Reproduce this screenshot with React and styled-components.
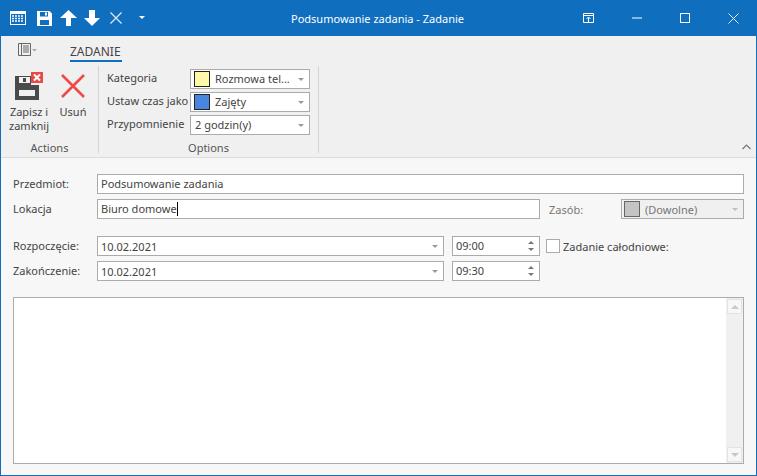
import styled, { createGlobalStyle } from "styled-components";

const GlobalStyle = createGlobalStyle`
  html, body { margin: 0; padding: 0; }
  body { width: 757px; height: 476px; overflow: hidden; font-family: "Noto Sans", sans-serif; font-size: 11px; color: #444; }
  * { box-sizing: border-box; }
`;

const Window = styled.div`
  width: 757px;
  height: 476px;
  display: flex;
  flex-direction: column;
  border: 1px solid #106ebe;
  border-top: none;
  background: #f7f7f7;
`;
const TitleBar = styled.div`
  height: 36px;
  background: #106ebe;
  display: grid;
  grid-template-columns: 199px 1fr 201px;
  align-items: center;
  color: #fff;
  flex: none;
`;
const QuickAccess = styled.div`
  display: flex;
  align-items: center;
  padding-left: 9px;
`;
const QuickIcon = styled.svg`
  display: block;
  flex: none;
  margin-right: ${(p) => p.$gap}px;
`;
const WindowTitle = styled.div`
  text-align: center;
  font-size: 11px;
`;
const WindowButtons = styled.div`
  display: flex;
  justify-content: flex-end;
  align-items: center;
  padding-right: 17px;
`;
const WindowIcon = styled.svg`
  display: block;
  margin-left: ${(p) => p.$gap}px;
`;
const Ribbon = styled.div`
  height: 122px;
  background: #f0f0f0;
  border-bottom: 1px solid #dcdcdc;
  position: relative;
  flex: none;
`;
const TabRow = styled.div`
  height: 26px;
  display: flex;
  align-items: flex-start;
  padding: 6px 0 0 16px;
`;
const Tab = styled.div`
  margin-left: 33px;
  height: 20px;
  width: 52px;
  font-size: 12px;
  line-height: 15px;
  padding-top: 2px;
  color: #444;
  border-bottom: 2px solid #106ebe;
  white-space: nowrap;
`;
const Groups = styled.div`
  display: flex;
  height: 87px;
  margin-top: 4px;
`;
const Group = styled.div`
  width: ${(p) => p.$width}px;
  border-right: 1px solid #d4d4d4;
  display: flex;
  flex-direction: column;
`;
const GroupBody = styled.div`
  flex: 1;
  min-height: 0;
  display: flex;
`;
const GroupLabel = styled.div`
  height: 10px;
  flex: none;
  text-align: center;
  line-height: 10px;
  color: #555;
`;
const BigButton = styled.div`
  width: ${(p) => p.$width}px;
  margin-left: ${(p) => p.$left || 0}px;
  padding-top: 6px;
  display: flex;
  flex-direction: column;
  align-items: center;
  line-height: 14px;
  text-align: center;
  white-space: nowrap;
`;
const BigIcon = styled.svg`
  display: block;
  margin-bottom: 1px;
`;
const OptionGrid = styled.div`
  display: grid;
  grid-template-columns: 83px 120px;
  grid-auto-rows: 23px;
  padding: 1px 0 0 8px;
  align-items: center;
`;
const OptionLabel = styled.div`
  white-space: nowrap;
  padding-bottom: 2px;
`;
const Combo = styled.div`
  height: 20px;
  width: ${(p) => (p.$width ? `${p.$width}px` : "auto")};
  flex: none;
  border: 1px solid #ababab;
  background: ${(p) => (p.$disabled ? "#f0f0f0" : "#fff")};
  color: ${(p) => (p.$disabled ? "#777" : "#444")};
  display: flex;
  align-items: center;
  padding-left: ${(p) => p.$pad ?? 4}px;
  position: relative;
  white-space: nowrap;
`;
const Swatch = styled.span`
  width: 16px;
  height: 16px;
  flex: none;
  border: 1px solid ${(p) => p.$border || "#222"};
  background: ${(p) => p.$color};
  margin-right: 5px;
`;
const Arrow = styled.span`
  position: absolute;
  right: 5px;
  top: 50%;
  margin-top: -1px;
  border-left: 3px solid transparent;
  border-right: 3px solid transparent;
  border-top: 3px solid ${(p) => p.$color || "#999"};
`;
const Collapse = styled.svg`
  position: absolute;
  right: 5px;
  bottom: 7px;
`;
const Form = styled.div`
  flex: 1;
  padding: 16px 12px 12px 12px;
  display: flex;
  flex-direction: column;
`;
const Row = styled.div`
  display: flex;
  align-items: center;
  height: 20px;
  margin-bottom: ${(p) => p.$mb ?? 5}px;
`;
const FieldLabel = styled.div`
  width: 84px;
  flex: none;
  white-space: nowrap;
  padding-bottom: 2px;
`;
const TextField = styled.div`
  width: ${(p) => p.$width}px;
  height: 20px;
  border: 1px solid #ababab;
  background: #fff;
  padding-left: 3px;
  line-height: 17px;
  flex: none;
`;
const Caret = styled.span`
  display: inline-block;
  width: 1px;
  height: 14px;
  background: #000;
  vertical-align: -3px;
`;
const ResourceLabel = styled.div`
  color: #777;
  margin-left: 9px;
  width: 72px;
`;
const Spinner = styled.div`
  width: 88px;
  height: 20px;
  margin-left: 8px;
  border: 1px solid #ababab;
  background: #fff;
  padding-left: 3px;
  line-height: 17px;
  position: relative;
  flex: none;
`;
const SpinUp = styled.span`
  position: absolute;
  right: 5px;
  top: 4px;
  border-left: 3px solid transparent;
  border-right: 3px solid transparent;
  border-bottom: 3px solid #777;
`;
const SpinDown = styled.span`
  position: absolute;
  right: 5px;
  bottom: 4px;
  border-left: 3px solid transparent;
  border-right: 3px solid transparent;
  border-top: 3px solid #777;
`;
const Check = styled.span`
  width: 14px;
  height: 14px;
  border: 1px solid #ababab;
  background: #fff;
  margin: 0 3px 0 6px;
  flex: none;
`;
const Notes = styled.div`
  margin-top: 16px;
  width: 731px;
  height: 167px;
  border: 1px solid #ababab;
  background: #fff;
  display: flex;
  justify-content: flex-end;
`;
const ScrollTrack = styled.div`
  width: 17px;
  background: #f0f0f0;
  display: flex;
  flex-direction: column;
  justify-content: space-between;
  align-items: center;
  padding: 1px;
`;
const ScrollButton = styled.div`
  width: 15px;
  height: 15px;
  border: 1px solid #e3e3e3;
  background: #f7f7f7;
  display: flex;
  align-items: center;
  justify-content: center;
`;
const ScrollGlyph = styled.span`
  border-left: 4px solid transparent;
  border-right: 4px solid transparent;
  ${(p) => (p.$up ? "border-bottom" : "border-top")}: 4px solid #c8c8c8;
`;

const App = () => {
  return (
    <>
      <GlobalStyle />
      <Window>
        <TitleBar>
          <QuickAccess>
            <QuickIcon $gap={11} width="16" height="16" viewBox="0 0 16 16">
              <rect x="0.5" y="1.5" width="15" height="13" fill="none" stroke="#fff" />
              <rect x="0" y="1" width="16" height="3" fill="#fff" />
              <path d="M2 6h12M2 8.500h12M2 11h12" stroke="#fff" strokeWidth="1.400" strokeDasharray="2 1" fill="none" />
            </QuickIcon>
            <QuickIcon $gap={8} width="15" height="15" viewBox="0 0 15 15">
              <path fillRule="evenodd" fill="#fff" d="M0 0h12.500L15 2.500V15H0zM3 1v4.500h8V1zM3 9v5h9V9zM8 1.500h2v3H8z" />
            </QuickIcon>
            <QuickIcon $gap={7} width="17" height="16" viewBox="0 0 17 16">
              <path fill="#fff" d="M8.500 0L17 8h-6v8H6V8H0z" />
            </QuickIcon>
            <QuickIcon $gap={10} width="16" height="16" viewBox="0 0 16 16">
              <path fill="#fff" d="M8 16L0 8h5V0h6v8h5z" />
            </QuickIcon>
            <QuickIcon $gap={17} width="12" height="12" viewBox="0 0 12 12">
              <path d="M.5.500l11 11M11.500.500l-11 11" stroke="#dce9f5" strokeWidth="1.300" fill="none" />
            </QuickIcon>
            <QuickIcon $gap={0} width="6" height="4" viewBox="0 0 6 4">
              <path fill="#fff" d="M0 0h6L3 3z" />
            </QuickIcon>
          </QuickAccess>
          <WindowTitle>Podsumowanie zadania - Zadanie</WindowTitle>
          <WindowButtons>
            <WindowIcon $gap={0} width="11" height="10" viewBox="0 0 11 10">
              <path d="M.5.500h10v9H.5zM0 2.500h11M5.500 9V4.500M3.500 6l2-2 2 2" stroke="#fff" fill="none" />
            </WindowIcon>
            <WindowIcon $gap={38} width="10" height="10" viewBox="0 0 10 10">
              <path d="M0 5h10" stroke="#fff" />
            </WindowIcon>
            <WindowIcon $gap={38} width="10" height="10" viewBox="0 0 10 10">
              <rect x="0.5" y="0.5" width="9" height="9" fill="none" stroke="#fff" />
            </WindowIcon>
            <WindowIcon $gap={38} width="11" height="11" viewBox="0 0 11 11">
              <path d="M.5.500l10 10M10.500.500l-10 10" stroke="#e6eff8" fill="none" />
            </WindowIcon>
          </WindowButtons>
        </TitleBar>
        <Ribbon>
          <TabRow>
            <svg width="20" height="16" viewBox="0 0 20 16">
              <path d="M1.500 1.500h12v12h-12zM4.500 1.500v12M6 4h6M6 6h6M6 8h6M6 10h6" stroke="#666" fill="none" />
              <path d="M15 7h5l-2.500 2.500z" fill="#aaa" />
            </svg>
            <Tab>ZADANIE</Tab>
          </TabRow>
          <Groups>
            <Group $width={98}>
              <GroupBody>
                <BigButton $width={56}>
                  <BigIcon width="30" height="32" viewBox="0 0 30 32">
                    <path fillRule="evenodd" fill="#4a4a4a" d="M1 4h24v24H1zM5 5v6h11V5zM9 6h3v4H9zM5 18v6h16v-6z" />
                    <path fill="#f0f0f0" d="M17 0h13v13H17z" />
                    <rect x="17" y="0" width="12" height="11" fill="#e84a4a" />
                    <path d="M20 2.500l6 6M26 2.500l-6 6" stroke="#fff" strokeWidth="2" />
                  </BigIcon>
                  Zapisz i<br />zamknij
                </BigButton>
                <BigButton $width={24} $left={4}>
                  <BigIcon width="26" height="32" viewBox="0 0 26 32">
                    <path d="M2 3l22 22M24 3L2 25" stroke="#ee4a4a" strokeWidth="2.600" fill="none" />
                  </BigIcon>
                  Usuń
                </BigButton>
              </GroupBody>
              <GroupLabel>Actions</GroupLabel>
            </Group>
            <Group $width={220}>
              <GroupBody>
                <OptionGrid>
                  <OptionLabel>Kategoria</OptionLabel>
                  <Combo $pad={3}>
                    <Swatch $color="#fff8a8" />
                    Rozmowa tel...
                    <Arrow />
                  </Combo>
                  <OptionLabel>Ustaw czas jako</OptionLabel>
                  <Combo $pad={3}>
                    <Swatch $color="#4a86e0" />
                    Zajęty
                    <Arrow />
                  </Combo>
                  <OptionLabel>Przypomnienie</OptionLabel>
                  <Combo>
                    2 godzin(y)
                    <Arrow />
                  </Combo>
                </OptionGrid>
              </GroupBody>
              <GroupLabel>Options</GroupLabel>
            </Group>
          </Groups>
          <Collapse width="9" height="6" viewBox="0 0 9 6">
            <path d="M.5 5l4-4 4 4" stroke="#777" fill="none" strokeWidth="1.200" />
          </Collapse>
        </Ribbon>
        <Form>
          <Row>
            <FieldLabel>Przedmiot:</FieldLabel>
            <TextField $width={647}>Podsumowanie zadania</TextField>
          </Row>
          <Row $mb={17}>
            <FieldLabel>Lokacja</FieldLabel>
            <TextField $width={443}>Biuro domowe<Caret /></TextField>
            <ResourceLabel>Zasób:</ResourceLabel>
            <Combo $disabled $pad={2} $width={123}>
              <Swatch $color="#c4c4c4" $border="#666" />
              (Dowolne)
              <Arrow $color="#c0c0c0" />
            </Combo>
          </Row>
          <Row>
            <FieldLabel>Rozpoczęcie:</FieldLabel>
            <Combo $pad={3} $width={347}>
              10.02.2021
              <Arrow />
            </Combo>
            <Spinner>
              09:00
              <SpinUp />
              <SpinDown />
            </Spinner>
            <Check />
            Zadanie całodniowe:
          </Row>
          <Row $mb={0}>
            <FieldLabel>Zakończenie:</FieldLabel>
            <Combo $pad={3} $width={347}>
              10.02.2021
              <Arrow />
            </Combo>
            <Spinner>
              09:30
              <SpinUp />
              <SpinDown />
            </Spinner>
          </Row>
          <Notes>
            <ScrollTrack>
              <ScrollButton><ScrollGlyph $up /></ScrollButton>
              <ScrollButton><ScrollGlyph /></ScrollButton>
            </ScrollTrack>
          </Notes>
        </Form>
      </Window>
    </>
  );
};

export default App;
